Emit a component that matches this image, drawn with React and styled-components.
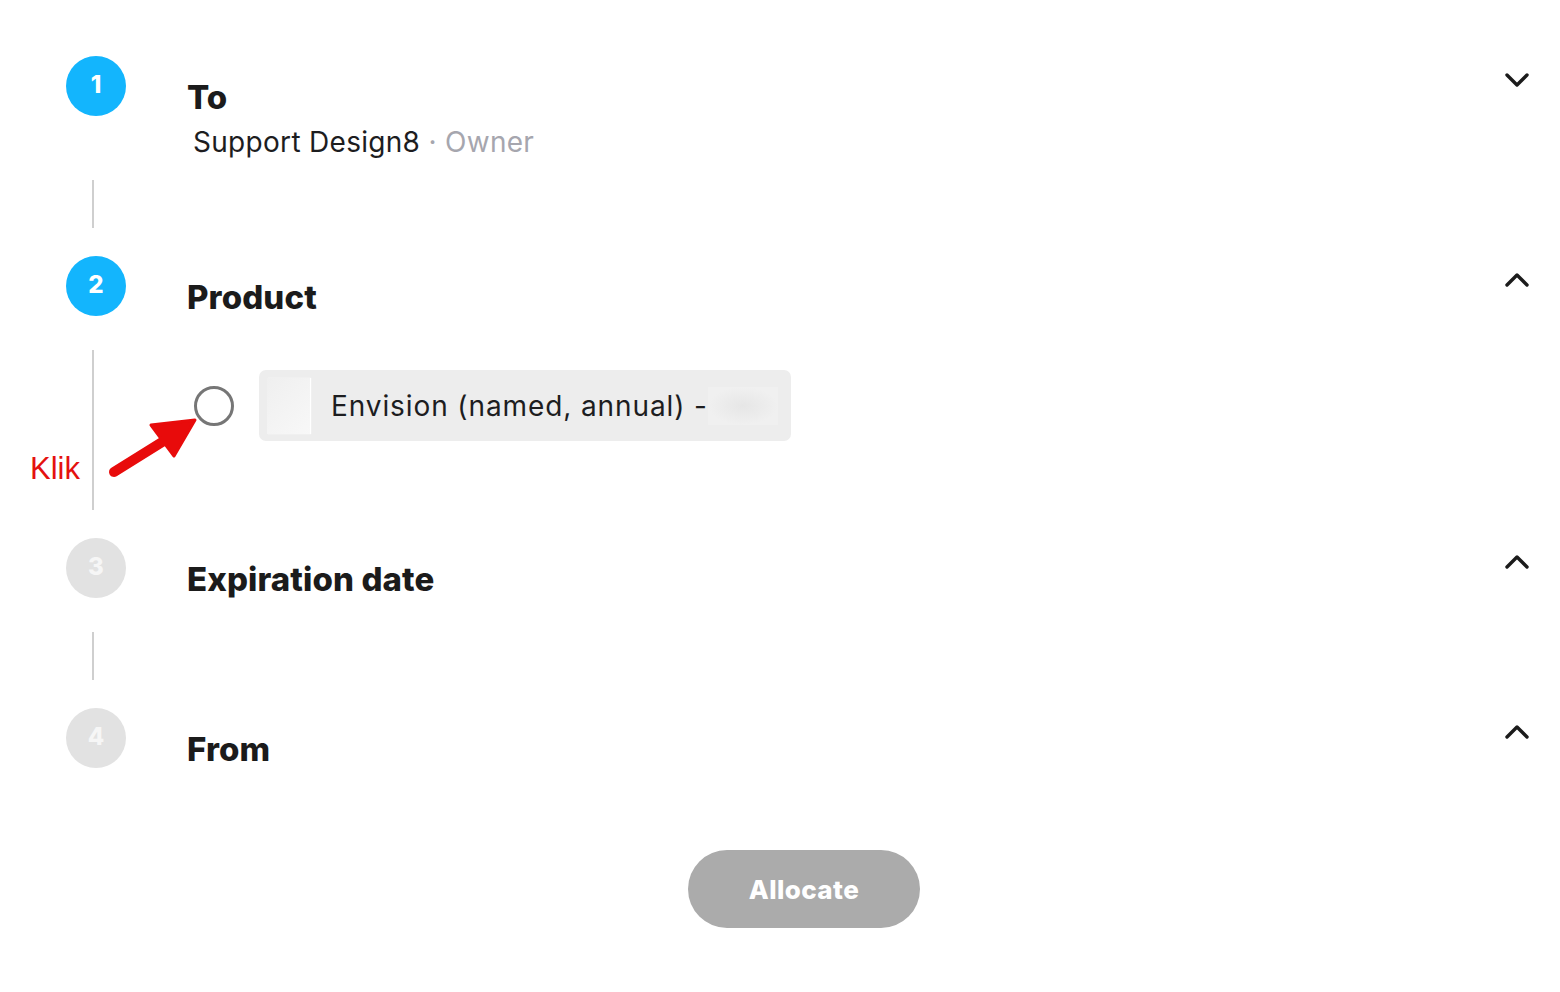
import React from 'react';
import styled, { createGlobalStyle } from 'styled-components';

const GlobalStyle = createGlobalStyle`
  html, body {
    margin: 0;
    padding: 0;
    background: #ffffff;
  }
  body {
    font-family: Inter, "Noto Sans", sans-serif;
    color: #1d1d1f;
  }
`;

const Page = styled.div`
  padding: 56px 18px 64px 66px;
  display: flex;
  flex-direction: column;
`;

const StepHeader = styled.div`
  display: flex;
  align-items: flex-start;
`;

const StepCircle = styled.div`
  flex: 0 0 60px;
  width: 60px;
  height: 60px;
  border-radius: 50%;
  background: ${(p) => (p.$active ? '#13b5fd' : '#e2e2e2')};
  color: ${(p) => (p.$active ? '#ffffff' : '#f6f6f6')};
  display: flex;
  align-items: center;
  justify-content: center;
  font-size: 24px;
  font-weight: 800;
  line-height: 1;
  padding-bottom: 2px;
  box-sizing: border-box;
`;

const StepText = styled.div`
  flex: 1 1 auto;
  margin-left: 61px;
  margin-top: 21px;
`;

const StepTitle = styled.div`
  font-size: 33px;
  line-height: 40px;
  font-weight: 800;
  color: #1b1b1b;
  letter-spacing: 0.1px;
`;

const StepSub = styled.div`
  margin-top: 9px;
  font-size: 28px;
  line-height: 32px;
  letter-spacing: 0.3px;
  margin-left: 6px;
  color: #1d1d1f;
`;

const Muted = styled.span`
  color: #a6a6ae;
`;

const Chevron = styled.div`
  flex: 0 0 auto;
  margin-top: 16px;
  margin-right: 12px;
  width: 26px;
  height: 16px;
  display: flex;
`;

const StepBody = styled.div`
  position: relative;
  margin: ${(p) => p.$top || 33}px 0 28px 26px;
  border-left: 2px solid #cfcfcf;
  min-height: ${(p) => p.$h || 48}px;
  padding: ${(p) => (p.$pad ? '20px 0 69px 100px' : '0')};
  box-sizing: border-box;
`;

const OptionRow = styled.div`
  display: flex;
  align-items: center;
`;

const Radio = styled.div`
  width: 40px;
  height: 40px;
  border-radius: 50%;
  border: 3px solid #767676;
  box-sizing: border-box;
  flex: 0 0 auto;
  background: #fff;
`;

const OptionBox = styled.div`
  margin-left: 25px;
  width: 532px;
  height: 71px;
  border-radius: 7px;
  background: #ededed;
  display: flex;
  align-items: center;
  padding-left: 8px;
  box-sizing: border-box;
`;

const Thumb = styled.div`
  width: 43px;
  height: 56px;
  background: linear-gradient(135deg, #efefef, #f8f8f8);
  box-shadow: 1px 0 1px #ffffff;
`;

const OptionLabel = styled.span`
  margin-left: 21px;
  font-size: 28px;
  letter-spacing: 0.9px;
  color: #1d1d1f;
  white-space: nowrap;
`;

const Blurred = styled.div`
  width: 70px;
  height: 38px;
  background: radial-gradient(ellipse at center, #e6e6e6 0%, #f0f0f0 70%);
`;

const Note = styled.span`
  position: absolute;
  left: -64px;
  top: 103px;
  font-family: "Liberation Sans", Arial, sans-serif;
  font-size: 31px;
  color: #e4110f;
  line-height: 1;
`;

const ArrowSvg = styled.svg`
  position: absolute;
  left: 7px;
  top: 58px;
  overflow: visible;
`;

const Footer = styled.div`
  display: flex;
  justify-content: center;
  margin-top: 81px;
`;

const AllocateButton = styled.button`
  width: 232px;
  height: 78px;
  border-radius: 39px;
  border: none;
  background: #ababab;
  color: #ffffff;
  font-family: Inter, "Noto Sans", sans-serif;
  font-size: 26px;
  letter-spacing: 0.4px;
  font-weight: 800;
  cursor: default;
`;

const ChevronIcon = ({ up }) => (
  <svg width="26" height="16" viewBox="0 0 26 16">
    <path
      d={up ? 'M3 13 L13 3 L23 13' : 'M3 3 L13 13 L23 3'}
      fill="none"
      stroke="#1b1b1b"
      strokeWidth="3.4"
      strokeLinecap="round"
      strokeLinejoin="round"
    />
  </svg>
);

const Step = ({ n, title, active, up, children }) => (
  <StepHeader>
    <StepCircle $active={active}>{n}</StepCircle>
    <StepText>
      <StepTitle>{title}</StepTitle>
      {children}
    </StepText>
    <Chevron>
      <ChevronIcon up={up} />
    </Chevron>
  </StepHeader>
);

export default function App() {
  return (
    <>
      <GlobalStyle />
      <Page>
        <Step n="1" title="To" active>
          <StepSub>
            Support Design8 <Muted>· Owner</Muted>
          </StepSub>
        </Step>
        <StepBody $top={22} $h={48} />

        <Step n="2" title="Product" active up />
        <StepBody $pad $h={160}>
          <OptionRow>
            <Radio />
            <OptionBox>
              <Thumb />
              <OptionLabel>Envision (named, annual) -</OptionLabel>
              <Blurred />
            </OptionBox>
          </OptionRow>
          <Note>Klik</Note>
          <ArrowSvg width="100" height="70" viewBox="0 0 100 70">
            <line
              x1="13"
              y1="64"
              x2="74"
              y2="26"
              stroke="#e80b0b"
              strokeWidth="10"
              strokeLinecap="round"
            />
            <polygon
              points="94,12 50,17 73,48"
              fill="#e80b0b"
              stroke="#e80b0b"
              strokeWidth="3"
              strokeLinejoin="round"
            />
          </ArrowSvg>
        </StepBody>

        <Step n="3" title="Expiration date" up />
        <StepBody $h={48} />

        <Step n="4" title="From" up />

        <Footer>
          <AllocateButton>Allocate</AllocateButton>
        </Footer>
      </Page>
    </>
  );
}
